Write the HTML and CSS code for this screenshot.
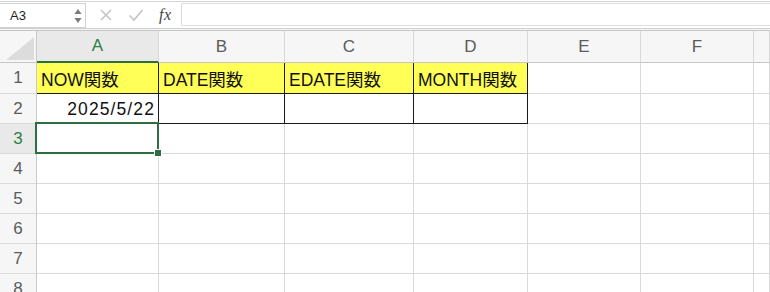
FILE: index.html
```html
<!DOCTYPE html>
<html lang="ja">
<head>
<meta charset="utf-8">
<link rel="stylesheet" href="styles.css">
</head>
<body>
<div class="app">
  <div class="fbar">
    <div class="namebox">
      <span class="nb-text">A3</span>
      <span class="spin">
        <svg width="8" height="16" viewBox="0 0 8 16"><path d="M4 1 L7.5 6 L0.5 6 Z" fill="#7a7a7a"/><path d="M0.5 10 L7.5 10 L4 15 Z" fill="#7a7a7a"/></svg>
      </span>
    </div>
    <div class="ficons">
      <svg class="ic" width="14" height="14" viewBox="0 0 14 14"><path d="M2 2 L12 12 M12 2 L2 12" stroke="#c4c4c4" stroke-width="1.6" fill="none"/></svg>
      <svg class="ic" width="16" height="14" viewBox="0 0 16 14"><path d="M1.5 7.5 L6 12 L14.5 2" stroke="#c4c4c4" stroke-width="1.6" fill="none"/></svg>
      <span class="fx">fx</span>
    </div>
    <div class="finput"></div>
  </div>
  <div class="sep"></div>
  <div class="grid">
    <div class="cell corner"><svg width="36" height="31" viewBox="0 0 36 31"><path d="M6 29 L34 29 L34 6 Z" fill="#dcdcdc"/></svg></div>
    <div class="cell hdr hsel">A</div>
    <div class="cell hdr">B</div>
    <div class="cell hdr">C</div>
    <div class="cell hdr">D</div>
    <div class="cell hdr">E</div>
    <div class="cell hdr">F</div>
    <div class="cell hdr"></div>

    <div class="cell rh">1</div>
    <div class="cell y bk">NOW関数</div>
    <div class="cell y bk">DATE関数</div>
    <div class="cell y bk">EDATE関数</div>
    <div class="cell y bk">MONTH関数</div>
    <div class="cell"></div>
    <div class="cell"></div>
    <div class="cell"></div>

    <div class="cell rh">2</div>
    <div class="cell bk num">2025/5/22</div>
    <div class="cell bk"></div>
    <div class="cell bk"></div>
    <div class="cell bk"></div>
    <div class="cell"></div>
    <div class="cell"></div>
    <div class="cell"></div>

    <div class="cell rh rsel">3</div>
    <div class="cell sel"></div>
    <div class="cell"></div>
    <div class="cell"></div>
    <div class="cell"></div>
    <div class="cell"></div>
    <div class="cell"></div>
    <div class="cell"></div>

    <div class="cell rh">4</div>
    <div class="cell"></div><div class="cell"></div><div class="cell"></div><div class="cell"></div><div class="cell"></div><div class="cell"></div><div class="cell"></div>

    <div class="cell rh">5</div>
    <div class="cell"></div><div class="cell"></div><div class="cell"></div><div class="cell"></div><div class="cell"></div><div class="cell"></div><div class="cell"></div>

    <div class="cell rh">6</div>
    <div class="cell"></div><div class="cell"></div><div class="cell"></div><div class="cell"></div><div class="cell"></div><div class="cell"></div><div class="cell"></div>

    <div class="cell rh">7</div>
    <div class="cell"></div><div class="cell"></div><div class="cell"></div><div class="cell"></div><div class="cell"></div><div class="cell"></div><div class="cell"></div>

    <div class="cell rh">8</div>
    <div class="cell"></div><div class="cell"></div><div class="cell"></div><div class="cell"></div><div class="cell"></div><div class="cell"></div><div class="cell"></div>
  </div>
</div>
</body>
</html>
```

FILE: styles.css
```css
html, body {
  margin: 0;
  padding: 0;
  background: #ffffff;
}
body {
  width: 770px;
  height: 292px;
  overflow: hidden;
  font-family: "Liberation Sans", "Noto Sans CJK JP", sans-serif;
}
.app {
  width: 770px;
}
.fbar {
  box-sizing: border-box;
  height: 27px;
  margin-top: 1px;
  border-top: 1px solid #d4d4d4;
  padding-top: 1px;
  display: flex;
  align-items: flex-start;
  background: #ffffff;
}
.namebox {
  box-sizing: border-box;
  width: 86px;
  height: 25px;
  border: 1px solid #d2d2d2;
  border-left: none;
  display: flex;
  align-items: center;
  justify-content: space-between;
  padding: 0 3px 0 10px;
  font-size: 13px;
  color: #1e1e1e;
}
.spin {
  display: flex;
  align-items: center;
}
.spin svg {
  display: block;
}
.ficons {
  width: 95px;
  height: 23px;
  display: flex;
  align-items: center;
  gap: 0;
}
.ic {
  display: block;
}
.ficons .ic:first-child {
  margin-left: 13px;
}
.ficons .ic:nth-child(2) {
  margin-left: 15px;
}
.fx {
  margin-left: 15px;
  font-family: "Liberation Serif", "DejaVu Serif", serif;
  font-style: italic;
  font-size: 16px;
  color: #444444;
  letter-spacing: 0.5px;
}
.finput {
  flex: 1;
  box-sizing: border-box;
  height: 23px;
  border: 1px solid #dcdcdc;
  border-right: none;
  border-radius: 2px 0 0 2px;
}
.sep {
  box-sizing: border-box;
  height: 3px;
  background: #f6f6f6;
  border-top: 1px solid #cfcfcf;
  border-bottom: 1px solid #c6c6c6;
}
.grid {
  display: grid;
  grid-template-columns: 37px 122px 126px 129px 114px 113px 113px 1fr;
  grid-template-rows: 32px 31px repeat(7, 30px);
}
.cell {
  box-sizing: border-box;
  border-right: 1px solid #dadada;
  border-bottom: 1px solid #dadada;
  display: flex;
  align-items: center;
  padding: 1px 4px 0 4px;
  font-size: 17.5px;
  color: #111111;
  white-space: nowrap;
  overflow: hidden;
  position: relative;
}
.corner {
  background: #f6f6f6;
  border-right: 1px solid #c8c8c8;
  border-bottom: 1px solid #c6c6c6;
  padding: 0;
  align-items: flex-end;
}
.corner svg {
  display: block;
}
.hdr {
  background: #f6f6f6;
  border-right: 1px solid #d8d8d8;
  border-bottom: 1px solid #c6c6c6;
  justify-content: center;
  color: #5b5b5b;
  font-size: 17px;
  padding: 0;
}
.hsel {
  background: #e9e9e9;
  color: #2f7d46;
  border-bottom: 2px solid #2e6d41;
}
.rh {
  background: #f6f6f6;
  border-right: 1px solid #c8c8c8;
  border-bottom: 1px solid #dadada;
  justify-content: center;
  color: #5b5b5b;
  font-size: 17px;
  padding: 0;
}
.rsel {
  background: #e9e9e9;
  color: #2f7d46;
}
.y {
  background: #ffff57;
}
.bk {
  border-right-color: #1a1a1a;
  border-bottom-color: #1a1a1a;
}
.num {
  justify-content: flex-end;
  padding-right: 3px;
  letter-spacing: 1.1px;
}
.sel {
  overflow: visible;
  z-index: 2;
}
.sel::after {
  content: "";
  position: absolute;
  left: -2px;
  top: -2px;
  right: -1px;
  bottom: -1px;
  border: 2px solid #2e6d41;
}
.sel::before {
  content: "";
  position: absolute;
  right: -4px;
  bottom: -4px;
  width: 6px;
  height: 6px;
  background: #2e6d41;
  border: 1px solid #ffffff;
  z-index: 3;
}
```
